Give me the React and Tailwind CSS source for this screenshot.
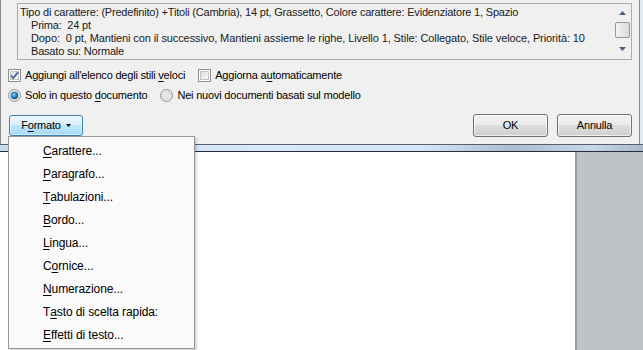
import React from 'react';

const menuItems = [
  ['', 'C', 'arattere...'],
  ['', 'P', 'aragrafo...'],
  ['', 'T', 'abulazioni...'],
  ['', 'B', 'ordo...'],
  ['', 'L', 'ingua...'],
  ['C', 'o', 'rnice...'],
  ['', 'N', 'umerazione...'],
  ['T', 'a', 'sto di scelta rapida:'],
  ['', 'E', 'ffetti di testo...'],
];

function Check({ checked }) {
  return (
    <svg width="13" height="13" viewBox="0 0 13 13" className="shrink-0">
      <defs>
        <linearGradient id={checked ? 'cbon' : 'cboff'} x1="0" y1="0" x2="1" y2="1">
          <stop offset="0" stopColor="#dcdcdc" />
          <stop offset="1" stopColor="#fbfbfb" />
        </linearGradient>
      </defs>
      <rect x="0.5" y="0.5" width="12" height="12" fill="#fff" stroke="#8e8f8f" />
      <rect x="2.5" y="2.5" width="8" height="8" fill={`url(#${checked ? 'cbon' : 'cboff'})`} stroke="#c4c4c4" />
      {checked && (
        <path d="M3 6.5 L5.3 9 L10 3.2" fill="none" stroke="#4a5f97" strokeWidth="1.8" />
      )}
    </svg>
  );
}

function Radio({ checked }) {
  return (
    <svg width="13" height="13" viewBox="0 0 13 13" className="shrink-0">
      <defs>
        <radialGradient id="rdot" cx="0.4" cy="0.35" r="0.7">
          <stop offset="0" stopColor="#8ad3f7" />
          <stop offset="0.6" stopColor="#1e86c8" />
          <stop offset="1" stopColor="#0e4f8a" />
        </radialGradient>
      </defs>
      <circle cx="6.5" cy="6.5" r="6" fill="#f2f2f2" stroke="#8e8f8f" />
      <circle cx="6.5" cy="6.5" r="4.5" fill="#e6e6e6" stroke="#d0d0d0" strokeWidth="0.8" />
      {checked && <circle cx="6.5" cy="6.5" r="3.4" fill="url(#rdot)" stroke="#134a7c" strokeWidth="0.6" />}
    </svg>
  );
}

function U({ children }) {
  return <span className="underline underline-offset-[2px] decoration-[1px]">{children}</span>;
}

export default function App() {
  return (
    <div className="w-[643px] h-[350px] relative overflow-hidden bg-white text-[11px] tracking-[-0.2px] text-black" style={{ fontFamily: '"Liberation Sans", Arial, sans-serif' }}>
      <div className="flex h-[144px]">
        <div className="w-[640px] bg-[#f0f0f0] border-l border-r border-[#8d8f91] flex flex-col">
          {/* description preview */}
          <div className="mt-[3px] ml-[16px] w-[615px] h-[57px] border border-[#abadb3] flex bg-[#f0f0f0]">
            <div className="flex-1 pl-[2px] pt-[2px] leading-[13px] whitespace-nowrap overflow-hidden text-[#1a1a1a]">
              <div>Tipo di carattere: (Predefinito) +Titoli (Cambria), 14 pt, Grassetto, Colore carattere: Evidenziatore 1, Spazio</div>
              <div className="pl-[11px]">Prima:&nbsp; 24 pt</div>
              <div className="pl-[11px] tracking-[-0.1px]">Dopo:&nbsp; 0 pt, Mantieni con il successivo, Mantieni assieme le righe, Livello 1, Stile: Collegato, Stile veloce, Priorità: 10</div>
              <div className="pl-[11px]">Basato su: Normale</div>
            </div>
            <div className="w-[17px] flex flex-col items-center bg-[#f0f0f0]">
              <div className="h-[17px] w-full flex items-center justify-center">
                <svg width="7" height="4" viewBox="0 0 7 4"><path d="M0 4 L3.5 0 L7 4 Z" fill="#4d6185" /></svg>
              </div>
              <div className="h-[16px] w-[15px] mt-[1px] rounded-[2px] border border-[#979797] bg-gradient-to-r from-[#f3f3f3] to-[#d9d9d9]" />
              <div className="flex-1 w-full flex items-center justify-center">
                <svg width="7" height="4" viewBox="0 0 7 4"><path d="M0 0 L3.5 4 L7 0 Z" fill="#4d6185" /></svg>
              </div>
            </div>
          </div>

          {/* checkboxes */}
          <div className="mt-[8px] h-[14px] flex items-center">
            <div className="ml-[7px] flex items-center gap-[4px]">
              <Check checked />
              <span>Aggiungi all'elenco degli stili <U>v</U>eloci</span>
            </div>
            <div className="ml-[13px] flex items-center gap-[4px]">
              <Check />
              <span>Aggiorna a<U>u</U>tomaticamente</span>
            </div>
          </div>

          {/* radios */}
          <div className="mt-[6px] h-[14px] flex items-center">
            <div className="ml-[7px] flex items-center gap-[4px]">
              <Radio checked />
              <span>Solo in questo <U>d</U>ocumento</span>
            </div>
            <div className="ml-[13px] flex items-center gap-[4px]">
              <Radio />
              <span>Nei nuovi documenti basati sul modello</span>
            </div>
          </div>

          {/* buttons */}
          <div className="mt-[12px] flex items-start">
            <button className="ml-[8px] mt-[1px] w-[74px] h-[21px] rounded-[3px] border border-[#3c7fb1] bg-[linear-gradient(#eaf6fd_0%,#d9f0fc_45%,#bee6fd_50%,#a7d9f5_100%)] flex items-center justify-center gap-[5px] shadow-[inset_0_0_0_1px_rgba(255,255,255,0.5)]">
              <span>F<U>o</U>rmato</span>
              <svg width="5" height="3" viewBox="0 0 5 3"><path d="M0 0 L2.5 3 L5 0 Z" fill="#000" /></svg>
            </button>
            <button className="ml-auto w-[75px] h-[23px] rounded-[3px] border border-[#707070] bg-[linear-gradient(#f2f2f2_0%,#ebebeb_45%,#dddddd_50%,#cfcfcf_100%)] shadow-[inset_0_0_0_1px_rgba(255,255,255,0.7)]">
              OK
            </button>
            <button className="ml-[9px] mr-[7px] w-[75px] h-[23px] rounded-[3px] border border-[#707070] bg-[linear-gradient(#f2f2f2_0%,#ebebeb_45%,#dddddd_50%,#cfcfcf_100%)] shadow-[inset_0_0_0_1px_rgba(255,255,255,0.7)]">
              Annulla
            </button>
          </div>
        </div>
        <div className="flex-1 bg-[#e4eaf1]" />
      </div>

      {/* window frame band */}
      <div className="h-[1px] bg-[#5b6068]" />
      <div className="h-[6px] bg-[linear-gradient(90deg,#c3d9ee_0%,#d8e9f9_40%,#d4e6f7_65%,#abbdd0_80%,#c6d7e8_92%,#a9b9ca_100%)]" />
      <div className="h-[1px] bg-[#262d38]" />

      {/* document area */}
      <div className="flex h-[198px]">
        <div className="flex-1 bg-white" />
        <div className="w-[68px] bg-[#bfc3c8] border-l-[2px] border-[#9a9ea6]" />
      </div>

      {/* dropdown menu */}
      <div className="absolute left-[8px] top-[136px] w-[187px] py-[2px] bg-[#fafafa] border border-[#979797] shadow-[2px_2px_2px_rgba(0,0,0,0.15)] text-[12px] tracking-[-0.1px]">
        {menuItems.map(([pre, key, rest], i) => (
          <div key={i} className="h-[23px] flex items-center pl-[34px] whitespace-nowrap">
            {pre}<U>{key}</U>{rest}
          </div>
        ))}
      </div>
    </div>
  );
}
